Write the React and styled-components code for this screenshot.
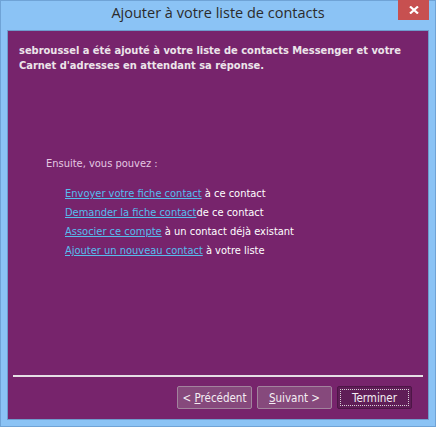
import React from 'react';
import styled, { createGlobalStyle } from 'styled-components';

const GlobalStyle = createGlobalStyle`
  html, body {
    margin: 0;
    padding: 0;
    background: #8bc3f5;
  }
  * {
    box-sizing: border-box;
  }
`;

const Window = styled.div`
  width: 436px;
  height: 427px;
  background: #8bc3f5;
  border: 1px solid #6fa3d6;
  display: flex;
  flex-direction: column;
  padding: 0 6px 6px 6px;
`;

const TitleBar = styled.div`
  height: 29px;
  display: grid;
  grid-template-columns: 1fr auto 1fr;
  align-items: start;
`;

const Title = styled.div`
  grid-column: 2;
  padding-top: 2px;
  font-family: 'Open Sans', 'Noto Sans', sans-serif;
  font-size: 14.5px;
  color: #2b2b2b;
  white-space: nowrap;
`;

const CloseButton = styled.button`
  grid-column: 3;
  justify-self: end;
  width: 31px;
  height: 20px;
  margin-top: -1px;
  border: none;
  padding: 0;
  background: #c75050;
  display: flex;
  align-items: center;
  justify-content: center;
`;

const Panel = styled.div`
  flex: 1;
  background: #77246c;
  border: 1px solid #6e9ccc;
  display: flex;
  flex-direction: column;
`;

const Header = styled.p`
  margin: 0;
  padding: 12px 20px 0 11px;
  font-family: Tahoma, 'DejaVu Sans Condensed', 'DejaVu Sans', sans-serif;
  font-weight: bold;
  font-size: 11px;
  line-height: 15px;
  color: #ece4ea;
`;

const Body = styled.div`
  flex: 1;
  padding: 84px 0 0 38px;
  font-family: Tahoma, 'DejaVu Sans Condensed', 'DejaVu Sans', sans-serif;
  font-size: 11px;
`;

const Lead = styled.div`
  color: #e4c8e2;
  line-height: 14px;
  margin-bottom: 13px;
`;

const Options = styled.ul`
  list-style: none;
  margin: 0;
  padding: 0 0 0 19px;
`;

const Option = styled.li`
  line-height: 19px;
  color: #ffffff;
  white-space: nowrap;
`;

const Link = styled.a`
  color: #56bdee;
  text-decoration: underline;
  cursor: pointer;
`;

const Separator = styled.div`
  height: 2px;
  margin: 0 5px;
  background: #e6e0e6;
`;

const ButtonRow = styled.div`
  display: flex;
  justify-content: flex-end;
  gap: 5px;
  padding: 9px 16px 10px 0;
`;

const Button = styled.button`
  width: 75px;
  height: 23px;
  padding: 0;
  border-radius: 2px;
  font-family: Tahoma, 'DejaVu Sans Condensed', 'DejaVu Sans', sans-serif;
  font-size: 11.5px;
  color: #f4eef3;
  border: 1px solid ${p => (p.$primary ? '#4d1646' : '#a2839d')};
  background: ${p => (p.$primary ? '#5f1e57' : '#86497c')};
  display: flex;
  align-items: center;
  justify-content: center;
  position: relative;
`;

const Focus = styled.span`
  position: absolute;
  inset: 2px;
  border: 1px dotted #d8cfd6;
`;

const Label = styled.span`
  white-space: pre;
`;

const Key = styled.span`
  text-decoration: underline;
`;

export default function App() {
  return (
    <>
      <GlobalStyle />
      <Window>
        <TitleBar>
          <Title>Ajouter à votre liste de contacts</Title>
          <CloseButton aria-label="Fermer">
            <svg width="10" height="8" viewBox="0 0 10 8">
              <path d="M1 0.5 L9 7.5 M9 0.5 L1 7.5" stroke="#ffffff" strokeWidth="2.2" />
            </svg>
          </CloseButton>
        </TitleBar>
        <Panel>
          <Header>
            sebroussel a été ajouté à votre liste de contacts Messenger et votre
            Carnet d'adresses en attendant sa réponse.
          </Header>
          <Body>
            <Lead>Ensuite, vous pouvez :</Lead>
            <Options>
              <Option><Link>Envoyer votre fiche contact</Link> à ce contact</Option>
              <Option><Link>Demander la fiche contact</Link>de ce contact</Option>
              <Option><Link>Associer ce compte</Link> à un contact déjà existant</Option>
              <Option><Link>Ajouter un nouveau contact</Link> à votre liste</Option>
            </Options>
          </Body>
          <Separator />
          <ButtonRow>
            <Button><Label>{'< '}<Key>P</Key>récédent</Label></Button>
            <Button><Label><Key>S</Key>uivant {'>'}</Label></Button>
            <Button $primary>
              <Focus />
              <Label>Terminer</Label>
            </Button>
          </ButtonRow>
        </Panel>
      </Window>
    </>
  );
}
